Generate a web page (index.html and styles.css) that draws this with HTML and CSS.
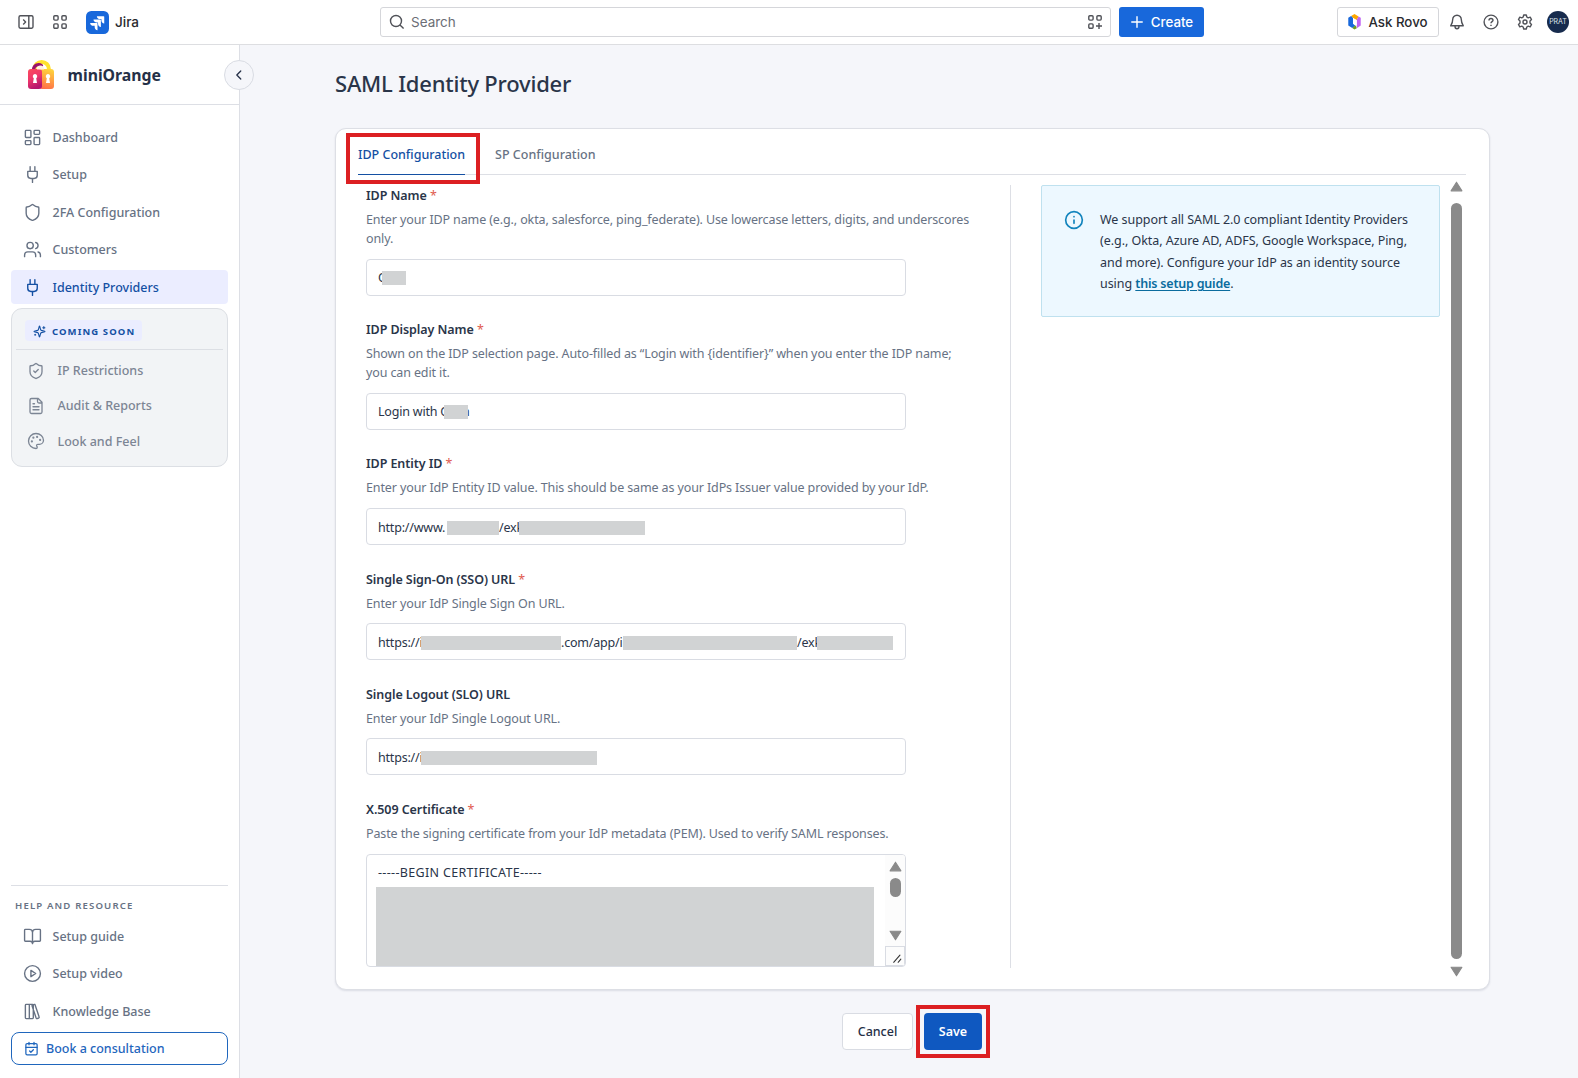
FILE: index.html
```html
<!DOCTYPE html>
<html lang="en">
<head>
    <meta charset="UTF-8">
    <meta name="viewport" content="width=device-width, initial-scale=1.0">
    <title>SAML Identity Provider</title>
    <link rel="stylesheet" href="styles.css">
</head>
<body>
    <!-- Top bar -->
    <header class="topbar">
        <div class="topbar-left">
            <svg class="top-icon" viewBox="0 0 16 16"><rect x="1" y="1.8" width="14" height="12.4" rx="1.4"/><path d="M10.8 2v12M5.2 5.6 7.6 8l-2.4 2.4"/></svg>
            <svg class="top-icon apps-icon" viewBox="0 0 16 16"><rect x="1.8" y="1.8" width="4.3" height="4.3" rx="1"/><rect x="9.9" y="1.8" width="4.3" height="4.3" rx="1"/><rect x="1.8" y="9.9" width="4.3" height="4.3" rx="1"/><rect x="9.9" y="9.9" width="4.3" height="4.3" rx="1"/></svg>
            <svg class="jira-logo" viewBox="0 0 24 24"><rect width="24" height="24" rx="5.5" fill="#1868db"/><path fill="#fff" d="M9.051 15.434H7.734c-1.988 0-3.413-1.218-3.413-3h7.085c.367 0 .605.26.605.63v7.130c-1.772 0-2.960-1.435-2.960-3.434zM12.551 11.891h-1.318c-1.987 0-3.413-1.196-3.413-2.978h7.085c.367 0 .627.239.627.608v7.130c-1.772 0-2.981-1.435-2.981-3.434zM16.071 8.370h-1.317c-1.987 0-3.413-1.218-3.413-3h7.085c.367 0 .605.261.605.630v7.130c-1.772 0-2.960-1.435-2.960-3.434z"/></svg>
            <span class="product">Jira</span>
        </div>
        <div class="search">
            <svg class="top-icon" viewBox="0 0 16 16"><circle cx="7" cy="7" r="5.500"/><path d="m11 11 3.600 3.600"/></svg>
            <span class="search-text">Search</span>
            <svg class="top-icon" viewBox="0 0 16 16"><rect x="1.800" y="1.800" width="4.300" height="4.300" rx="1"/><rect x="9.900" y="1.800" width="4.300" height="4.300" rx="1"/><rect x="1.800" y="9.900" width="4.300" height="4.300" rx="1"/><path d="M12 9v6M9 12h6"/></svg>
        </div>
        <button class="create"><svg viewBox="0 0 16 16"><path d="M8 2v12M2 8h12"/></svg>Create</button>
        <div class="topbar-right">
            <button class="rovo">
                <svg viewBox="0 0 16 18"><path fill="#fca700" d="M4.200 2.300 8 0l4.500 2.700-2 4L6.300 4.500z"/><path fill="#bf63f3" d="M12.500 2.700 15 4.300V13l-4.500 2.900V6.500z"/><path fill="#1868db" d="M1 4.300 4.200 2.300l2.100 2.200V11l3 2-3.800 2.800L1 13z"/><path fill="#6a9a23" d="m5.500 15.800 3.800-3.300 1.200 3.400L8 17.500z"/><path fill="#fff" d="m6.300 4.500 4.200 2.500v5.500L9 13.200 6.300 10.800z"/></svg>
                Ask Rovo
            </button>
            <svg class="top-icon" viewBox="0 0 16 16"><path d="M8 1.200c-2.600 0-4.300 2-4.300 4.300 0 3.200-.7 4.300-2 6.300h12.600c-1.300-2-2-3.100-2-6.300 0-2.300-1.700-4.300-4.300-4.300zM6 12.200c0 1.300.8 2.500 2 2.500s2-1.200 2-2.500"/></svg>
            <svg class="top-icon" viewBox="0 0 16 16"><circle cx="8" cy="8" r="6.900"/><path d="M6 6.400c0-1.200.9-1.900 2-1.900s2 .7 2 1.800c0 1.300-2 1.400-2 2.900M8 10.800v1.100"/></svg>
            <svg class="top-icon" viewBox="0 0 16 16"><path d="M6.700 1h2.600l.5 2 1.400.8 2-.6 1.300 2.300L13 7v2l1.500 1.500-1.300 2.300-2-.6-1.400.8-.5 2H6.700l-.5-2-1.400-.8-2 .6-1.300-2.300L3 9V7L1.500 5.500l1.300-2.300 2 .6L6.200 3z"/><circle cx="8" cy="8" r="2"/></svg>
            <span class="avatar">PRAT</span>
        </div>
    </header>

    <div class="layout">
        <!-- Sidebar -->
        <aside class="sidebar">
            <div class="brand">
                <svg class="brand-logo" viewBox="0 0 26 30">
                    <defs>
                        <linearGradient id="lock-left" x1="0" y1="0" x2="0.400" y2="1"><stop offset="0" stop-color="#fb4a5c"/><stop offset="0.500" stop-color="#f0386a"/><stop offset="1" stop-color="#b5166f"/></linearGradient>
                        <linearGradient id="lock-right" x1="0.600" y1="0" x2="0.400" y2="1"><stop offset="0" stop-color="#ffd23c"/><stop offset="1" stop-color="#ff7048"/></linearGradient>
                    </defs>
                    <path d="M6.500 11V9a7.200 7 0 0 1 14.400 0v3" fill="none" stroke="#ffe22e" stroke-width="4"/>
                    <path d="M5.500 12V9.500C6 5 10.500 3.500 13.500 5.500" fill="none" stroke="#97136c" stroke-width="3.200"/>
                    <rect x="11" y="9" width="15" height="20" rx="3" fill="url(#lock-right)"/>
                    <rect x="0" y="9" width="14" height="20" rx="3" fill="url(#lock-left)"/>
                    <path d="M9 9.500a3.500 4 0 0 1 7 0z" fill="#fff3e0"/>
                    <path fill="#fff" d="M7 14a2.300 2.300 0 0 0-1.200 4.200L5 23h4l-.8-4.800A2.300 2.300 0 0 0 7 14zM20 14a2.300 2.300 0 0 0-1.200 4.200L18 23h4l-.8-4.800A2.300 2.300 0 0 0 20 14z"/>
                </svg>
                <span class="brand-name">miniOrange</span>
                <button class="collapse"><svg viewBox="0 0 16 16"><path d="m10 3.500-4.500 4.500 4.500 4.500"/></svg></button>
            </div>

            <nav class="nav">
                <a class="nav-item"><svg viewBox="0 0 24 24"><rect x="3" y="3" width="7" height="9" rx="1"/><rect x="14" y="3" width="7" height="5" rx="1"/><rect x="14" y="12" width="7" height="9" rx="1"/><rect x="3" y="16" width="7" height="5" rx="1"/></svg><span>Dashboard</span></a>
                <a class="nav-item"><svg viewBox="0 0 24 24"><path d="M12 22v-5M9 8V2M15 8V2M18 8v5a4 4 0 0 1-4 4h-4a4 4 0 0 1-4-4V8z"/></svg><span>Setup</span></a>
                <a class="nav-item"><svg viewBox="0 0 24 24"><path d="M20 13c0 5-3.500 7.500-7.660 8.950a1 1 0 0 1-.67-.01C7.500 20.500 4 18 4 13V6a1 1 0 0 1 1-1c2 0 4.500-1.200 6.240-2.720a1.170 1.170 0 0 1 1.520 0C14.510 3.810 17 5 19 5a1 1 0 0 1 1 1z"/></svg><span>2FA Configuration</span></a>
                <a class="nav-item"><svg viewBox="0 0 24 24"><path d="M16 21v-2a4 4 0 0 0-4-4H6a4 4 0 0 0-4 4v2M22 21v-2a4 4 0 0 0-3-3.870M16 3.130a4 4 0 0 1 0 7.750"/><circle cx="9" cy="7" r="4"/></svg><span>Customers</span></a>
                <a class="nav-item active"><svg viewBox="0 0 24 24"><path d="M12 22v-5M9 8V2M15 8V2M18 8v5a4 4 0 0 1-4 4h-4a4 4 0 0 1-4-4V8z"/></svg><span>Identity Providers</span></a>
            </nav>

            <div class="soon">
                <div class="soon-head">
                    <span class="soon-badge"><svg viewBox="0 0 24 24"><path d="M9.940 15.500A2 2 0 0 0 8.500 14.060l-6.140-1.580a.5.5 0 0 1 0-.96L8.500 9.940A2 2 0 0 0 9.940 8.500l1.580-6.140a.5.5 0 0 1 .96 0L14.060 8.500A2 2 0 0 0 15.500 9.940l6.140 1.580a.5.5 0 0 1 0 .96L15.500 14.060a2 2 0 0 0-1.440 1.440l-1.580 6.140a.5.5 0 0 1-.96 0zM20 3v4M22 5h-4M4 17v2M5 18H3"/></svg>COMING SOON</span>
                </div>
                <a class="soon-item"><svg viewBox="0 0 24 24"><path d="M20 13c0 5-3.500 7.500-7.660 8.950a1 1 0 0 1-.67-.01C7.500 20.500 4 18 4 13V6a1 1 0 0 1 1-1c2 0 4.500-1.200 6.240-2.720a1.170 1.170 0 0 1 1.520 0C14.510 3.810 17 5 19 5a1 1 0 0 1 1 1zM9 12l2 2 4-4"/></svg><span>IP Restrictions</span></a>
                <a class="soon-item"><svg viewBox="0 0 24 24"><path d="M15 2H6a2 2 0 0 0-2 2v16a2 2 0 0 0 2 2h12a2 2 0 0 0 2-2V7zM14 2v4a2 2 0 0 0 2 2h4M10 9H8M16 13H8M16 17H8"/></svg><span>Audit &amp; Reports</span></a>
                <a class="soon-item"><svg viewBox="0 0 24 24"><path d="M12 2C6.500 2 2 6.500 2 12s4.500 10 10 10c.93 0 1.650-.75 1.650-1.690 0-.44-.18-.83-.44-1.120-.29-.29-.44-.65-.44-1.130a1.640 1.640 0 0 1 1.670-1.670h2c3.050 0 5.550-2.500 5.550-5.550C21.970 6.010 17.460 2 12 2z"/><circle cx="13.500" cy="6.500" r=".6"/><circle cx="17.500" cy="10.500" r=".6"/><circle cx="8.500" cy="7.500" r=".6"/><circle cx="6.500" cy="12.500" r=".6"/></svg><span>Look and Feel</span></a>
            </div>

            <div class="help">
                <h2 class="help-title">HELP AND RESOURCE</h2>
                <a class="nav-item"><svg viewBox="0 0 24 24"><path d="M12 7v14M3 18a1 1 0 0 1-1-1V4a1 1 0 0 1 1-1h5a4 4 0 0 1 4 4 4 4 0 0 1 4-4h5a1 1 0 0 1 1 1v13a1 1 0 0 1-1 1h-6a3 3 0 0 0-3 3 3 3 0 0 0-3-3z"/></svg><span>Setup guide</span></a>
                <a class="nav-item"><svg viewBox="0 0 24 24"><circle cx="12" cy="12" r="10"/><path d="m10 8 6 4-6 4z"/></svg><span>Setup video</span></a>
                <a class="nav-item"><svg viewBox="0 0 24 24"><rect x="3" y="3" width="5" height="18" rx="1"/><path d="M8 3h4a1 1 0 0 1 1 1v16a1 1 0 0 1-1 1H8M20.400 18.900c.2.500-.1 1.100-.6 1.300l-1.900.7c-.5.2-1.100-.1-1.300-.6L11.500 5.100c-.2-.5.1-1.100.6-1.300l1.900-.7c.5-.2 1.100.1 1.300.6z"/></svg><span>Knowledge Base</span></a>
                <a class="book"><svg viewBox="0 0 24 24"><path d="M8 2v4M16 2v4M3 10h18M9 16l2 2 4-4"/><rect x="3" y="4" width="18" height="18" rx="2"/></svg><span>Book a consultation</span></a>
            </div>
        </aside>

        <!-- Main content -->
        <main class="main">
            <h1>SAML Identity Provider</h1>

            <section class="card">
                <div class="tabs">
                    <div class="tab active">IDP Configuration<span class="marker"></span></div>
                    <div class="tab">SP Configuration</div>
                </div>

                <div class="card-body">
                    <form class="form">
                        <div class="field">
                            <label>IDP Name <em>*</em></label>
                            <p>Enter your IDP name (e.g., okta, salesforce, ping_federate). Use lowercase letters, digits, and underscores<br>only.</p>
                            <div class="input"><span class="part part-name">O</span><i class="mask mask-name"></i></div>
                        </div>
                        <div class="field">
                            <label>IDP Display Name <em>*</em></label>
                            <p>Shown on the IDP selection page. Auto-filled as “Login with {identifier}” when you enter the IDP name;<br>you can edit it.</p>
                            <div class="input"><span class="part part-display">Login with O</span><i class="mask mask-name"></i><span class="tail">n</span></div>
                        </div>
                        <div class="field">
                            <label>IDP Entity ID <em>*</em></label>
                            <p>Enter your IdP Entity ID value. This should be same as your IdPs Issuer value provided by your IdP.</p>
                            <div class="input"><span class="part part-www">http://www.</span><i class="mask mask-host"></i><span class="part part-exk">/exk</span><i class="mask mask-entity"></i></div>
                        </div>
                        <div class="field">
                            <label>Single Sign-On (SSO) URL <em>*</em></label>
                            <p>Enter your IdP Single Sign On URL.</p>
                            <div class="input"><span class="part part-https">https://i</span><i class="mask mask-domain"></i><span class="part part-app">.com/app/i</span><i class="mask mask-path"></i><span class="part part-exk">/exk</span><i class="mask mask-key"></i></div>
                        </div>
                        <div class="field">
                            <label>Single Logout (SLO) URL</label>
                            <p>Enter your IdP Single Logout URL.</p>
                            <div class="input"><span class="part part-https">https://i</span><i class="mask mask-logout"></i></div>
                        </div>
                        <div class="field">
                            <label>X.509 Certificate <em>*</em></label>
                            <p>Paste the signing certificate from your IdP metadata (PEM). Used to verify SAML responses.</p>
                            <div class="textarea">
                                <div class="cert">
                                    <div class="cert-text">-----BEGIN CERTIFICATE-----</div>
                                    <div class="cert-mask"></div>
                                </div>
                                <div class="cert-bar">
                                    <svg class="arrow" viewBox="0 0 12 10"><path d="M6 1 11 9H1z"/></svg>
                                    <span class="cert-thumb"></span>
                                    <svg class="arrow arrow-down" viewBox="0 0 12 10"><path d="M6 9 1 1h10z"/></svg>
                                    <svg class="resizer" viewBox="0 0 20 19"><path d="m8.500 16.500 7-8M13.500 16.500l3-3.500"/></svg>
                                </div>
                            </div>
                        </div>
                    </form>

                    <div class="info">
                        <svg viewBox="0 0 24 24"><circle cx="12" cy="12" r="10"/><path d="M12 16v-4M12 8h.01"/></svg>
                        <p>We support all SAML 2.0 compliant Identity Providers<br>(e.g., Okta, Azure AD, ADFS, Google Workspace, Ping,<br>and more). Configure your IdP as an identity source<br>using <a>this setup guide</a>.</p>
                    </div>

                    <div class="scrollbar">
                        <svg class="arrow" viewBox="0 0 12 10"><path d="M6 1 11 9H1z"/></svg>
                        <span class="thumb"></span>
                        <svg class="arrow" viewBox="0 0 12 10"><path d="M6 9 1 1h10z"/></svg>
                    </div>
                </div>
            </section>

            <div class="actions">
                <button class="cancel">Cancel</button>
                <button class="save">Save<span class="marker"></span></button>
            </div>
        </main>
    </div>
</body>
</html>
```
FILE: styles.css
```css
/* General Styles */
* {
    box-sizing: border-box;
}

body {
    margin: 0;
    height: 1078px;
    overflow: hidden;
    font-family: "Noto Sans", "Open Sans", sans-serif;
    font-size: 12.5px;
    color: #2a3549;
    background: #f5f6fa;
}

button {
    font-family: inherit;
    padding: 0;
    margin: 0;
}

svg {
    display: block;
    flex: none;
    fill: none;
    stroke: currentColor;
    stroke-width: 2;
    stroke-linecap: round;
    stroke-linejoin: round;
}

/* Top bar */
.topbar {
    display: flex;
    align-items: center;
    height: 45px;
    padding: 0 9px 0 18px;
    border-bottom: 1px solid #dddee1;
    background: #fff;
    font-family: Inter, sans-serif;
    color: #292a2e;
}

.topbar-left {
    display: flex;
    align-items: center;
    width: 362px;
}

.top-icon {
    width: 16px;
    height: 16px;
    stroke-width: 1.4;
    color: #505258;
    stroke-linecap: butt;
}

.apps-icon {
    margin-left: 18px;
}

.jira-logo {
    width: 23px;
    height: 23px;
    margin: 0 6px 0 18px;
    stroke: none;
}

.product {
    font-size: 13.5px;
    font-weight: 500;
}

.search {
    display: flex;
    align-items: center;
    width: 731px;
    height: 30px;
    padding: 0 7px 0 8px;
    border: 1px solid #d5d6da;
    border-radius: 3px;
}

.search-text {
    flex: 1;
    margin-left: 6px;
    font-size: 13.5px;
    color: #6b6e76;
}

.create {
    display: flex;
    align-items: center;
    justify-content: center;
    width: 85px;
    height: 30px;
    margin-left: 8px;
    gap: 7px;
    border: none;
    border-radius: 3px;
    background: #1868db;
    color: #fff;
    font-size: 13.3px;
    font-weight: 500;
}

.create svg {
    width: 14px;
    height: 14px;
    stroke-width: 1.6;
}

.topbar-right {
    display: flex;
    align-items: center;
    gap: 18px;
    margin-left: auto;
}

.rovo {
    display: flex;
    align-items: center;
    justify-content: center;
    gap: 6px;
    width: 102px;
    height: 30px;
    margin-right: -8px;
    border: 1px solid #d5d6da;
    border-radius: 3px;
    background: #fff;
    color: #292a2e;
    font-size: 13.3px;
    font-weight: 500;
}

.rovo svg {
    width: 15px;
    height: 16px;
    stroke: none;
}

.avatar {
    width: 22px;
    height: 22px;
    margin-left: -3.5px;
    border-radius: 50%;
    background: #172b4d;
    color: #dfe3ea;
    font-size: 7px;
    line-height: 22px;
    text-align: center;
}

/* Sidebar */
.layout {
    display: flex;
    height: 1033px;
}

.sidebar {
    display: flex;
    flex: none;
    flex-direction: column;
    width: 240px;
    border-right: 1px solid #dddfe5;
    background: #fff;
    color: #677284;
}

.brand {
    position: relative;
    display: flex;
    align-items: center;
    height: 60px;
    padding-left: 28px;
    border-bottom: 1px solid #dddfe5;
}

.brand-logo {
    width: 26px;
    height: 30px;
    stroke: none;
}

.brand-name {
    margin-left: 13.5px;
    font-size: 15.800px;
    font-weight: 700;
}

.brand-name,
.collapse {
    color: #253047;
}

.collapse {
    position: absolute;
    top: 15px;
    right: -15px;
    display: flex;
    align-items: center;
    justify-content: center;
    width: 30px;
    height: 30px;
    border: 1px solid #d9dce3;
    border-radius: 50%;
    background: #f5f6fa;
}

.collapse svg {
    width: 14px;
    height: 14px;
    stroke-width: 1.5;
}

.nav {
    display: flex;
    flex-direction: column;
    gap: 3.5px;
    padding: 15px 11px 0;
}

.nav-item {
    display: flex;
    align-items: center;
    height: 34px;
    padding-left: 12px;
    gap: 10.5px;
    border-radius: 4px;
    font-weight: 500;
}

.nav-item svg {
    width: 19px;
    height: 19px;
    stroke-width: 1.75;
}

.nav-item.active {
    background: #ebedff;
    color: #1450a3;
}

.soon {
    height: 159px;
    margin: 4px 11px 0;
    padding: 0 4px;
    border: 1px solid #dcdfe4;
    border-radius: 11px;
    background: #f2f4f6;
    color: #7c8594;
}

.soon-head {
    height: 41px;
    margin-bottom: 3px;
    padding: 11px 0 0 9px;
    border-bottom: 1px solid #dcdfe4;
}

.soon-badge {
    display: inline-flex;
    align-items: center;
    gap: 6px;
    width: 117px;
    height: 21px;
    padding: 1px 0 0 8px;
    border-radius: 4px;
    background: #ebedff;
    color: #1450a3;
    font-size: 9.5px;
    font-weight: 700;
    letter-spacing: 1.1px;
    white-space: nowrap;
}

.soon-badge svg {
    width: 13px;
    height: 13px;
}

.soon-item {
    display: flex;
    align-items: center;
    height: 35.3px;
    padding-left: 11px;
    gap: 12.5px;
    font-weight: 500;
}

.soon-item svg {
    width: 18px;
    height: 18px;
    stroke-width: 1.75;
}

.help {
    display: flex;
    flex-direction: column;
    gap: 3.5px;
    margin: auto 11px 13px;
    padding-top: 11px;
    border-top: 1px solid #dddfe5;
}

.help-title {
    margin: 0 0 2px 4px;
    font-size: 9.6px;
    line-height: 17px;
    letter-spacing: 1.15px;
    font-weight: 600;
}

.help .nav-item,
.book {
    padding-bottom: 1px;
}

.book {
    display: flex;
    align-items: center;
    gap: 7px;
    height: 33px;
    padding-left: 12px;
    border: 1px solid #1f66bd;
    border-radius: 8px;
    color: #1f66bd;
    font-weight: 500;
}

.book svg {
    width: 15px;
    height: 15px;
}

/* Main content */
.main {
    flex: 1;
    padding: 22px 88px 0 95px;
}

h1 {
    margin: 0;
    font-size: 22px;
    line-height: 32px;
    font-weight: 500;
    letter-spacing: -0.2px;
}

.card {
    height: 862px;
    margin-top: 29px;
    padding: 0 23px 0 22px;
    border: 1px solid #dddfe5;
    border-radius: 11px;
    background: #fff;
    box-shadow: 0 1px 2px rgba(30, 40, 70, 0.12);
}

.tabs {
    display: flex;
    height: 46px;
    gap: 30px;
    border-bottom: 1px solid #dddfe5;
}

.tab {
    position: relative;
    height: 46px;
    line-height: 51px;
    font-weight: 500;
    color: #677284;
    white-space: nowrap;
}

.tab.active {
    border-bottom: 1px solid #1450a3;
    color: #1450a3;
}

/* Red frames that point out the tab and the save button */
.marker {
    position: absolute;
    border: 4px solid #dc1f22;
}

.tab .marker {
    top: 4px;
    left: -12px;
    right: -15px;
    bottom: -10px;
}

.save .marker {
    inset: -8px;
}

.card-body {
    display: flex;
    height: 793px;
    padding-top: 10px;
}

.form {
    flex: none;
    width: 653px;
    height: 783px;
    padding-left: 8px;
    border-right: 1px solid #dddfe5;
}

.field {
    margin-bottom: 23.5px;
}

.field label {
    display: block;
    font-weight: 600;
    line-height: 21px;
    letter-spacing: -0.07px;
}

.field em {
    color: #e05a4e;
    font-style: normal;
    font-weight: 400;
}

.field p {
    margin: 4px 0 10.700px;
    line-height: 19px;
    letter-spacing: -0.12px;
    color: #677284;
    white-space: nowrap;
}

.input {
    display: flex;
    align-items: center;
    width: 540px;
    height: 37px;
    padding: 1px 0 0 11px;
    border: 1px solid #d9dce3;
    border-radius: 4px;
    letter-spacing: -0.2px;
    white-space: nowrap;
}

/* Redacted values: the mask lies over the last letters of the part before it */
.mask {
    position: relative;
    height: 14px;
    margin-top: 1px;
    background: #d1d3d4;
}

.part-name { width: 3.5px; }
.mask-name { width: 24px; }
.part-display { width: 66px; }
.part-www { width: 69px; }
.mask-host { width: 52px; }
.part-exk { width: 20px; }
.mask-entity { width: 126px; }
.part-https { width: 43px; }
.mask-domain { width: 140px; }
.part-app { width: 62px; }
.mask-path { width: 174px; }
.mask-key { width: 76px; }
.mask-logout { width: 176px; }

.tail {
    margin-left: -6px;
}

.textarea {
    display: flex;
    width: 540px;
    height: 113px;
    border: 1px solid #d9dce3;
    border-radius: 4px;
    overflow: hidden;
}

.cert {
    flex: 1;
    padding-left: 9px;
}

.cert-text {
    height: 32px;
    padding-left: 2px;
    line-height: 36px;
    letter-spacing: 0.33px;
}

.cert-mask {
    width: 498px;
    height: 80px;
    background: #d1d3d4;
}

.cert-bar {
    display: flex;
    flex-direction: column;
    align-items: center;
    width: 20px;
    padding-top: 6px;
    background: #fcfcfc;
}

.arrow {
    width: 13px;
    height: 11px;
    fill: #8a8a8a;
    stroke: #8a8a8a;
    stroke-width: 1;
}

.cert-thumb {
    width: 11px;
    height: 21px;
    margin-top: 6px;
    border-radius: 6px;
    background: #8a8a8a;
}

.arrow-down {
    margin-top: 33px;
}

.resizer {
    width: 20px;
    height: 20px;
    margin-top: 5px;
    border: 1px solid #d9dce3;
    stroke: #333;
    stroke-width: 1.200;
}

.info {
    display: flex;
    flex: none;
    width: 399px;
    height: 132px;
    margin-left: 30px;
    padding: 24px 0 0 22px;
    border: 1px solid #bfe1ef;
    border-radius: 2px;
    background: #edf8ff;
}

.info svg {
    width: 20px;
    height: 20px;
    color: #1284bd;
}

.info p {
    margin: -1px 0 0 16px;
    line-height: 21.400px;
    letter-spacing: -0.05px;
    white-space: nowrap;
}

.info a {
    color: #0a6c9e;
    font-weight: 600;
    letter-spacing: -0.2px;
    text-decoration: underline;
    text-underline-offset: 2px;
}

.scrollbar {
    display: flex;
    flex: none;
    flex-direction: column;
    align-items: center;
    width: 18px;
    height: 793px;
    margin-left: 7px;
}

.scrollbar .arrow {
    margin-top: -4px;
}

.thumb {
    width: 11px;
    height: 756px;
    margin: 11px 0;
    border-radius: 6px;
    background: #8a8a8a;
}

.actions {
    display: flex;
    gap: 11px;
    margin: 23px 0 0 507px;
}

.actions button {
    height: 37px;
    border-radius: 4px;
    font-size: 12.5px;
}

.cancel {
    width: 71px;
    border: 1px solid #d9dce3;
    background: #fff;
    color: #253047;
    font-weight: 500;
}

.save {
    position: relative;
    width: 58px;
    border: none;
    background: #0f58c0;
    color: #fff;
    font-weight: 600;
}
```
